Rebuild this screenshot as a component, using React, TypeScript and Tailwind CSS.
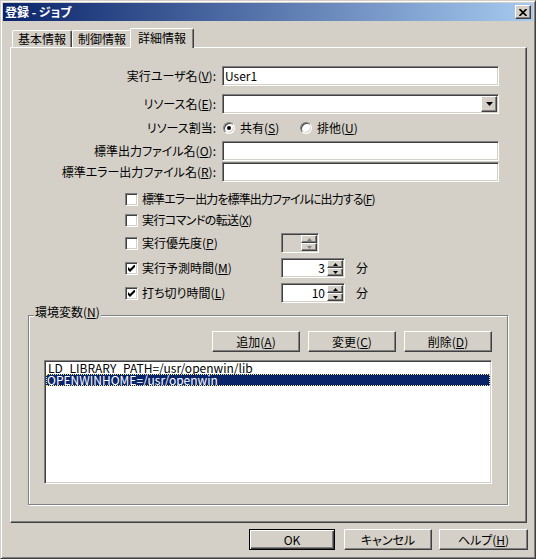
import type { ReactNode } from 'react';

const raised =
  'border border-t-white border-l-white border-r-[#404040] border-b-[#404040] shadow-[inset_-1px_-1px_0_#808080]';
const sunken =
  'border border-t-[#808080] border-l-[#808080] border-r-white border-b-white shadow-[inset_1px_1px_0_#404040,inset_-1px_-1px_0_#d4d0c8]';

const U = ({ c }: { c: string }) => (
  <span className="underline underline-offset-[1px] decoration-1">{c}</span>
);

const Button = ({ children, w, primary }: { children: ReactNode; w: string; primary?: boolean }) => (
  <div
    className={`h-[21px] ${w} flex items-center justify-center bg-[#d4d0c8] ${
      primary
        ? 'border border-black shadow-[inset_1px_1px_0_#fff,inset_-1px_-1px_0_#404040,inset_-2px_-2px_0_#808080]'
        : raised
    }`}
  >
    {children}
  </div>
);

const Edit = ({ value }: { value?: string }) => (
  <div className={`h-[20px] w-[277px] bg-white ${sunken} flex items-center pl-[2px]`}>{value}</div>
);

const Radio = ({ on }: { on?: boolean }) => (
  <div className={`w-[12px] h-[12px] rounded-full bg-white ${sunken} flex items-center justify-center`}>
    {on && <div className="w-[4px] h-[4px] rounded-full bg-black" />}
  </div>
);

const Check = ({ on }: { on?: boolean }) => (
  <div className={`w-[13px] h-[13px] shrink-0 bg-white ${sunken} flex items-center justify-center`}>
    {on && (
      <svg width="7" height="7" viewBox="0 0 7 7">
        <path d="M0 2 L2 4 L7 -1 L7 2 L2 7 L0 5 Z" fill="#000" />
      </svg>
    )}
  </div>
);

const Arrow = ({ up, color }: { up?: boolean; color: string }) => (
  <svg width="5" height="3" viewBox="0 0 5 3">
    <polygon points={up ? '2.5,0 5,3 0,3' : '0,0 5,0 2.5,3'} fill={color} />
  </svg>
);

const Spin = ({ value, w, disabled }: { value?: string; w: string; disabled?: boolean }) => (
  <div className={`h-[20px] ${w} ${sunken} p-[1px] flex ${disabled ? 'bg-[#d4d0c8]' : 'bg-white'}`}>
    <div className="flex-1 flex items-center justify-end pr-[2px]">{value}</div>
    <div className="w-[16px] flex flex-col">
      <div className={`flex-1 bg-[#d4d0c8] ${raised} flex items-center justify-center`}>
        <Arrow up color={disabled ? '#808080' : '#000'} />
      </div>
      <div className={`flex-1 bg-[#d4d0c8] ${raised} flex items-center justify-center`}>
        <Arrow color={disabled ? '#808080' : '#000'} />
      </div>
    </div>
  </div>
);

const FormRow = ({ label, children, className }: { label: ReactNode; children: ReactNode; className: string }) => (
  <div className={`flex items-center ${className}`}>
    <div className="w-[205px] text-right whitespace-nowrap">{label}</div>
    <div className="ml-[6px] flex items-center">{children}</div>
  </div>
);

const CheckRow = ({
  on,
  label,
  h,
  spin,
  tight,
}: {
  on?: boolean;
  label: ReactNode;
  h: string;
  spin?: ReactNode;
  tight?: string;
}) => (
  <div className={`flex items-center ${h}`}>
    <div className="w-[156px] flex items-center gap-[4px] whitespace-nowrap">
      <Check on={on} />
      <span className={tight}>{label}</span>
    </div>
    {spin}
  </div>
);

const Tab = ({ label, active }: { label: string; active?: boolean }) =>
  active ? (
    <div className="relative z-10 -mx-[2px] -mb-px h-[20px] w-[64px] bg-[#d4d0c8] border-t border-l border-r border-t-white border-l-white border-r-[#404040] shadow-[inset_-1px_0_0_#808080] rounded-t-[2px] flex items-center justify-center pb-[2px]">
      {label}
    </div>
  ) : (
    <div className="h-[17px] w-[60px] bg-[#d4d0c8] border-t border-l border-r border-t-white border-l-white border-r-[#404040] shadow-[inset_-1px_0_0_#808080] rounded-t-[2px] flex items-center justify-center">
      {label}
    </div>
  );

export default function App() {
  return (
    <div className="w-[536px] h-[559px] bg-[#d4d0c8] border border-t-[#d4d0c8] border-l-[#d4d0c8] border-r-[#404040] border-b-[#404040] shadow-[inset_1px_1px_0_#fff,inset_-1px_-1px_0_#808080] p-[2px] flex flex-col text-[12px] leading-[14px] text-black font-['Noto_Sans_CJK_JP',sans-serif] [font-feature-settings:'palt']">
      {/* title bar */}
      <div className="h-[18px] shrink-0 flex items-center bg-[linear-gradient(to_right,#0a246a,#a6caf0)]">
        <span className="pl-[2px] font-bold text-white">登録 - ジョブ</span>
        <div className={`ml-auto mr-[2px] w-[16px] h-[14px] bg-[#d4d0c8] ${raised} flex items-center justify-center`}>
          <svg width="8" height="7" viewBox="0 0 8 7">
            <path d="M0.5 0 L7.5 7 M7.5 0 L0.5 7" stroke="#000" strokeWidth="1.6" />
          </svg>
        </div>
      </div>

      {/* tabs */}
      <div className="mt-[7px] pl-[9px] flex items-end">
        <Tab label="基本情報" />
        <Tab label="制御情報" />
        <Tab label="詳細情報" active />
      </div>

      {/* tab page */}
      <div className="ml-[7px] mr-[6px] h-[476px] shrink-0 border border-t-white border-l-white border-r-[#404040] border-b-[#404040] shadow-[inset_-1px_-1px_0_#808080] flex flex-col pt-[18px]">
        <FormRow className="h-[20px]" label={<>実行ユーザ名(<U c="V" />):</>}>
          <Edit value="User1" />
        </FormRow>
        <FormRow className="h-[20px] mt-[8px]" label={<>リソース名(<U c="E" />):</>}>
          <div className={`h-[20px] w-[277px] bg-white ${sunken} p-[1px] flex justify-end`}>
            <div className={`w-[16px] h-full bg-[#d4d0c8] ${raised} flex items-center justify-center`}>
              <svg width="7" height="4" viewBox="0 0 7 4">
                <polygon points="0,0 7,0 3.5,4" fill="#000" />
              </svg>
            </div>
          </div>
        </FormRow>
        <FormRow className="h-[16px] mt-[6px]" label="リソース割当:">
          <div className="w-[78px] flex items-center">
            <div className="ml-[1px]">
              <Radio on />
            </div>
            <span className="ml-[5px]">
              共有(<U c="S" />)
            </span>
          </div>
          <Radio />
          <span className="ml-[5px]">
            排他(<U c="U" />)
          </span>
        </FormRow>
        <FormRow className="h-[20px] mt-[5px]" label={<>標準出力ファイル名(<U c="O" />):</>}>
          <Edit />
        </FormRow>
        <FormRow className="h-[20px] mt-[1px]" label={<>標準エラー出力ファイル名(<U c="R" />):</>}>
          <Edit />
        </FormRow>

        {/* check options */}
        <div className="mt-[9px] pl-[114px] flex flex-col gap-[5px]">
          <CheckRow
            h="h-[16px]"
            tight="tracking-[-0.9px]"
            label={<>標準エラー出力を標準出力ファイルに出力する(<U c="F" />)</>}
          />
          <CheckRow h="h-[16px]" tight="tracking-[-0.6px]" label={<>実行コマンドの転送(<U c="X" />)</>} />
          <CheckRow h="h-[20px]" label={<>実行優先度(<U c="P" />)</>} spin={<Spin w="w-[38px]" disabled />} />
          <CheckRow
            on
            h="h-[20px]"
            label={<>実行予測時間(<U c="M" />)</>}
            spin={
              <>
                <Spin w="w-[64px]" value="3" />
                <span className="ml-[11px]">分</span>
              </>
            }
          />
          <CheckRow
            on
            h="h-[20px]"
            label={<>打ち切り時間(<U c="L" />)</>}
            spin={
              <>
                <Spin w="w-[64px]" value="10" />
                <span className="ml-[11px]">分</span>
              </>
            }
          />
        </div>

        {/* environment variables */}
        <div className="relative mt-[12px] ml-[17px] mr-[18px] border border-[#808080] shadow-[1px_1px_0_#fff,inset_1px_1px_0_#fff] pt-[15px] px-[15px] pb-[20px]">
          <span className="absolute top-[-10px] left-[5px] px-[1px] h-[12px] leading-[12px] bg-[#d4d0c8]">
            環境変数(<U c="N" />)
          </span>
          <div className="flex justify-end gap-[8px]">
            <Button w="w-[88px]">
              追加(<U c="A" />)
            </Button>
            <Button w="w-[88px]">
              変更(<U c="C" />)
            </Button>
            <Button w="w-[88px]">
              削除(<U c="D" />)
            </Button>
          </div>
          <div className={`mt-[8px] h-[124px] bg-white ${sunken} p-[1px]`}>
            <div className="h-[12px] leading-[12px] pl-[2px] whitespace-nowrap">LD_LIBRARY_PATH=/usr/openwin/lib</div>
            <div className="h-[12px] leading-[12px] pl-[1px] whitespace-nowrap bg-[#0a246a] text-white outline-1 outline-dotted outline-[#f0e68c] -outline-offset-1">
              OPENWINHOME=/usr/openwin
            </div>
          </div>
        </div>
      </div>

      {/* dialog buttons */}
      <div className="mt-[6px] pr-[5px] flex justify-end">
        <Button w="w-[86px]" primary>
          OK
        </Button>
        <div className="ml-[9px]">
          <Button w="w-[88px]">キャンセル</Button>
        </div>
        <div className="ml-[7px]">
          <Button w="w-[89px]">
            ヘルプ(<U c="H" />)
          </Button>
        </div>
      </div>
    </div>
  );
}
